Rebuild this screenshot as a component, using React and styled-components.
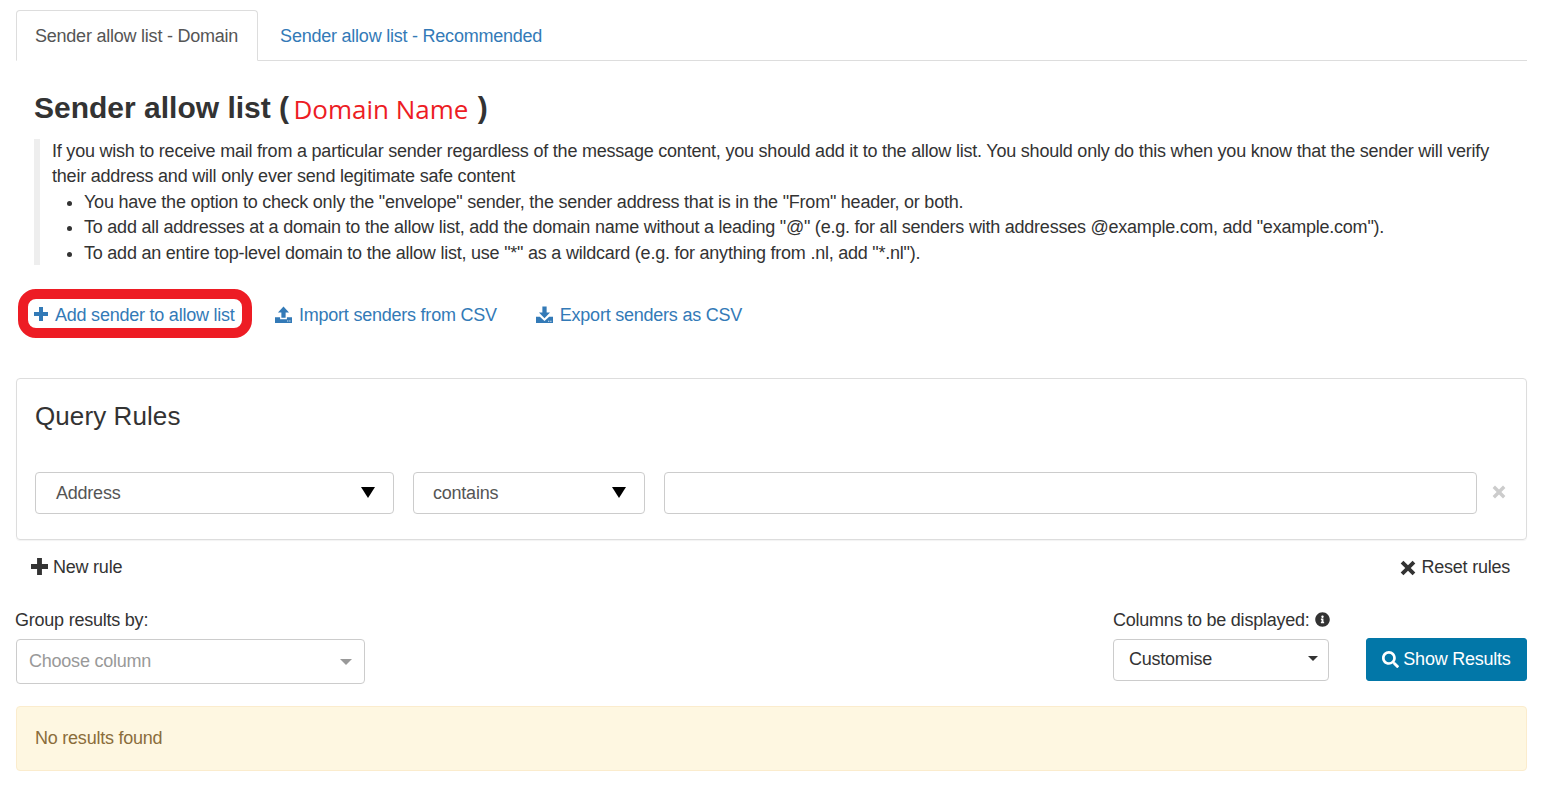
import React from 'react';
import styled, { createGlobalStyle } from 'styled-components';
import { FaSearch, FaInfoCircle } from 'react-icons/fa';

const GlobalStyle = createGlobalStyle`
  html, body {
    margin: 0;
    padding: 0;
    background: #fff;
  }
  body {
    font-family: "Liberation Sans", Arial, sans-serif;
    font-size: 18px;
    line-height: 25.4px;
    letter-spacing: -0.23px;
    color: #333;
  }
  * {
    box-sizing: border-box;
  }
`;

const Page = styled.div`
  padding: 10px 18px 0 16px;
  width: 1545px;
  height: 793px;
  overflow: hidden;
`;

const Tabs = styled.div`
  display: flex;
  height: 51px;
  border-bottom: 1px solid #ddd;
`;

const Tab = styled.div`
  height: ${(p) => (p.$active ? '51px' : '50px')};
  padding: 13px ${(p) => (p.$active ? '19px' : '22px')} 0 ${(p) => (p.$active ? '18px' : '21px')};
  color: ${(p) => (p.$active ? '#555' : '#337ab7')};
  background: ${(p) => (p.$active ? '#fff' : 'transparent')};
  border: 1px solid ${(p) => (p.$active ? '#ddd' : 'transparent')};
  border-bottom: 1px solid ${(p) => (p.$active ? '#fff' : 'transparent')};
  border-radius: 4px 4px 0 0;
`;

const Title = styled.h1`
  margin: 27px 0 0 18px;
  height: 51px;
  font-size: 30px;
  line-height: 40px;
  font-weight: 700;
  letter-spacing: 0;
  color: #333;
`;

const DomainName = styled.span`
  font-family: "Open Sans", sans-serif;
  font-size: 26px;
  font-weight: 400;
  color: #ed1c24;
  margin: 0 1px 0 -4px;
  vertical-align: -1px;
`;

const Note = styled.div`
  margin-left: 18px;
  padding: 0 30px 0 12px;
  border-left: 6px solid #eee;
  height: 126px;
`;

const NoteText = styled.p`
  margin: 0;
  letter-spacing: -0.215px;
`;

const NoteList = styled.ul`
  margin: 0;
  padding-left: 32px;
`;

const Actions = styled.div`
  display: flex;
  align-items: center;
  height: 49px;
  margin: 24px 0 0 2px;
`;

const Highlight = styled.div`
  display: flex;
  align-items: center;
  width: 234px;
  height: 49px;
  padding-left: 6px;
  border: 10px solid #ed1c24;
  border-radius: 18px;
  margin-right: 23px;
`;

const ActionLink = styled.a`
  display: flex;
  align-items: center;
  gap: 7px;
  color: #337ab7;
  margin-right: 39px;
  padding-top: 5px;
  white-space: nowrap;
`;

const Glyph = styled.svg`
  display: block;
  flex: none;
  width: ${(p) => p.$size}px;
  height: ${(p) => p.$size}px;
  margin-top: ${(p) => p.$lift || 0}px;
  fill: currentColor;
`;

const Panel = styled.div`
  margin-top: 40px;
  height: 162px;
  border: 1px solid #ddd;
  border-radius: 4px;
  padding: 17px 18px 0;
  box-shadow: 0 1px 1px rgba(0, 0, 0, 0.05);
`;

const PanelTitle = styled.h2`
  margin: 0;
  height: 76px;
  font-size: 26px;
  line-height: 40px;
  font-weight: 400;
  letter-spacing: 0.09px;
  color: #333;
`;

const RuleRow = styled.div`
  display: flex;
  align-items: center;
  gap: 19px;
`;

const Field = styled.div`
  display: flex;
  align-items: center;
  justify-content: space-between;
  width: ${(p) => p.$width}px;
  flex: ${(p) => (p.$width ? 'none' : 1)};
  height: 42px;
  padding: 2px 18px 0 ${(p) => p.$inset || 20}px;
  border: 1px solid #ccc;
  border-radius: 4px;
  color: #555;
  background: #fff;
`;

const Arrow = styled.span`
  width: 0;
  height: 0;
  margin-top: ${(p) => p.$lift || 0}px;
  border-left: ${(p) => p.$size}px solid transparent;
  border-right: ${(p) => p.$size}px solid transparent;
  border-top: ${(p) => p.$height}px solid ${(p) => p.$color};
`;

const RemoveRule = styled.span`
  display: flex;
  flex: none;
  width: 16px;
  margin: -3px 0 0 -4px;
  color: #ccc;
`;

const RuleLinks = styled.div`
  display: flex;
  justify-content: space-between;
  align-items: center;
  height: 53px;
  padding: 2px 17px 0 15px;
`;

const RuleLink = styled.span`
  display: flex;
  align-items: center;
  gap: 5px;
  color: #333;
`;

const Filters = styled.div`
  display: flex;
  align-items: flex-start;
  margin-top: 14px;
`;

const FilterGroup = styled.div`
  display: flex;
  flex-direction: column;
  flex: none;
  width: ${(p) => p.$width}px;
  margin-right: ${(p) => p.$gap || 0}px;
`;

const FilterLabel = styled.label`
  display: flex;
  align-items: center;
  gap: 5px;
  height: 25px;
  margin-bottom: 7px;
  padding-top: 2px;
  white-space: nowrap;

  svg {
    flex: none;
    margin-top: -2px;
  }
`;

const GroupLabel = styled(FilterLabel)`
  margin-left: -1px;
`;

const GroupSelect = styled.div`
  display: flex;
  align-items: center;
  justify-content: space-between;
  height: 45px;
  padding: 0 12px;
  border: 1px solid #ccc;
  border-radius: 4px;
  color: #999;
`;

const ColumnSelect = styled.div`
  display: flex;
  align-items: center;
  justify-content: space-between;
  height: 42px;
  padding: 0 10px 0 15px;
  border: 1px solid #ccc;
  border-radius: 4px;
  color: #333;
`;

const ShowResults = styled.button`
  display: flex;
  align-items: center;
  justify-content: center;
  gap: 4px;
  flex: none;
  width: 161px;
  height: 43px;
  margin-top: 31px;
  padding: 0;
  border: 1px solid #0277a8;
  border-radius: 3px;
  background: #0277a8;
  color: #fff;
  font: inherit;
  letter-spacing: inherit;
`;

const Alert = styled.div`
  margin-top: 22px;
  height: 65px;
  padding: 19px 18px 0;
  border: 1px solid #fbeccd;
  border-radius: 4px;
  background: #fef7e1;
  color: #8a6d3b;
`;

const PlusIcon = ({ size, lift }) => (
  <Glyph $size={size} $lift={lift} viewBox="0 0 14 14">
    <path d="M5 0h4v5h5v4H9v5H5V9H0V5h5z" />
  </Glyph>
);

const RemoveIcon = ({ size }) => (
  <Glyph $size={size} viewBox="0 0 14 14">
    <path d="M3 .6 7 4.600 11 .6 13.400 3 9.400 7l4 4-2.400 2.400-4-4-4 4L.6 11l4-4-4-4z" />
  </Glyph>
);

const UploadIcon = () => (
  <Glyph $size={17} $lift={-3} viewBox="0 0 16 16">
    <path d="M8 .5 13.200 6H10v5H6V6H2.800z" />
    <path fillRule="evenodd" d="M0 10.500h4.800V12.500h6.400V10.500H16V16H0zM11.500 13.600v1h1v-1zM13.500 13.600v1h1v-1z" />
  </Glyph>
);

const DownloadIcon = () => (
  <Glyph $size={17} $lift={-3} viewBox="0 0 16 16">
    <path d="M6 .5h4V6h3.200L8 11.500 2.800 6H6z" />
    <path fillRule="evenodd" d="M0 10h3.600L8 14l4.400-4H16v6H0zM11.500 13.800v1h1v-1zM13.500 13.800v1h1v-1z" />
  </Glyph>
);

export default function App() {
  return (
    <Page>
      <GlobalStyle />
      <Tabs>
        <Tab $active>Sender allow list - Domain</Tab>
        <Tab>Sender allow list - Recommended</Tab>
      </Tabs>
      <Title>
        Sender allow list ( <DomainName>Domain Name</DomainName> )
      </Title>
      <Note>
        <NoteText>
          If you wish to receive mail from a particular sender regardless of the message content, you should add it to the allow list. You should only do this when you know that the sender will verify their address and will only ever send legitimate safe content
        </NoteText>
        <NoteList>
          <li>You have the option to check only the "envelope" sender, the sender address that is in the "From" header, or both.</li>
          <li>To add all addresses at a domain to the allow list, add the domain name without a leading "@" (e.g. for all senders with addresses @example.com, add "example.com").</li>
          <li>To add an entire top-level domain to the allow list, use "*" as a wildcard (e.g. for anything from .nl, add "*.nl").</li>
        </NoteList>
      </Note>
      <Actions>
        <Highlight>
          <ActionLink>
            <PlusIcon size={14} lift={-4} />
            Add sender to allow list
          </ActionLink>
        </Highlight>
        <ActionLink>
          <UploadIcon />
          Import senders from CSV
        </ActionLink>
        <ActionLink>
          <DownloadIcon />
          Export senders as CSV
        </ActionLink>
      </Actions>
      <Panel>
        <PanelTitle>Query Rules</PanelTitle>
        <RuleRow>
          <Field $width={359}>
            Address
            <Arrow $size={7} $height={11} $color="#000" $lift={-3} />
          </Field>
          <Field $width={232} $inset={19}>
            contains
            <Arrow $size={7} $height={11} $color="#000" $lift={-3} />
          </Field>
          <Field />
          <RemoveRule>
            <RemoveIcon size={14} />
          </RemoveRule>
        </RuleRow>
      </Panel>
      <RuleLinks>
        <RuleLink>
          <PlusIcon size={17} lift={-2} />
          New rule
        </RuleLink>
        <RuleLink>
          <RemoveIcon size={16} />
          Reset rules
        </RuleLink>
      </RuleLinks>
      <Filters>
        <FilterGroup $width={349} $gap={748}>
          <GroupLabel>Group results by:</GroupLabel>
          <GroupSelect>
            Choose column
            <Arrow $size={6} $height={6} $color="#999" />
          </GroupSelect>
        </FilterGroup>
        <FilterGroup $width={216} $gap={37}>
          <FilterLabel>
            Columns to be displayed:
            <FaInfoCircle size={15} />
          </FilterLabel>
          <ColumnSelect>
            Customise
            <Arrow $size={5} $height={5} $color="#333" $lift={-4} />
          </ColumnSelect>
        </FilterGroup>
        <ShowResults>
          <FaSearch size={17} />
          Show Results
        </ShowResults>
      </Filters>
      <Alert>No results found</Alert>
    </Page>
  );
}
